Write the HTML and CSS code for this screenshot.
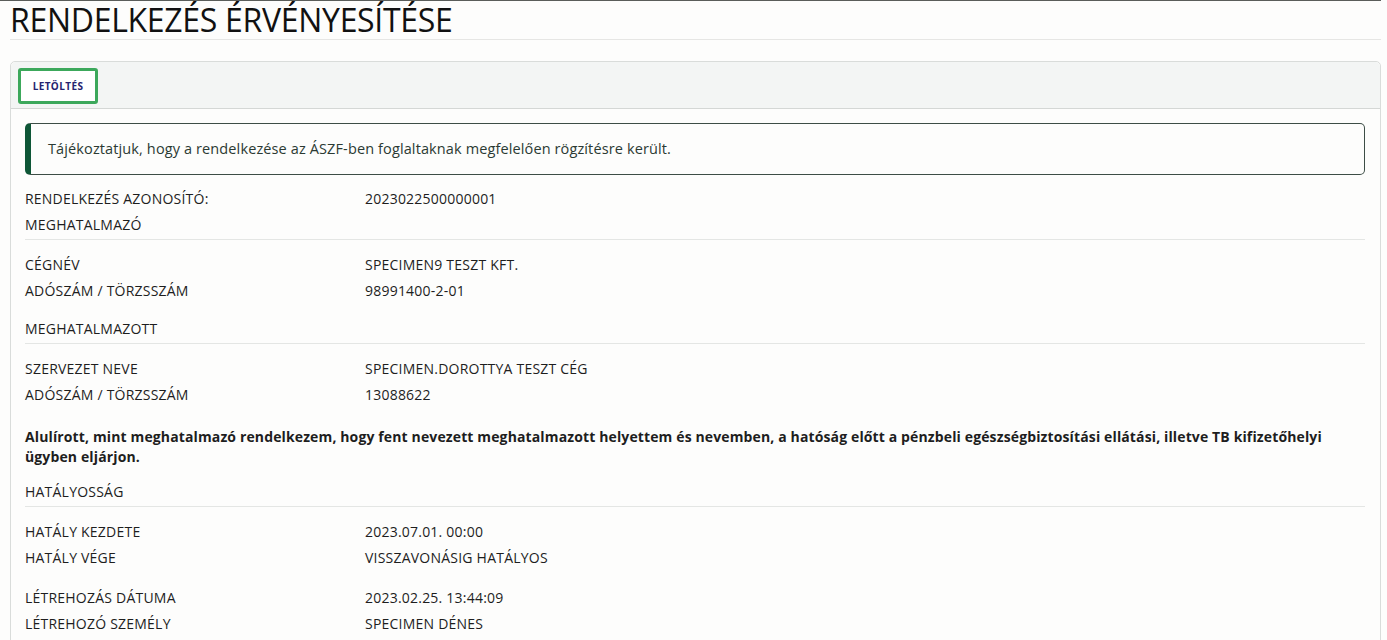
FILE: index.html
```html
<!DOCTYPE html>
<html lang="hu">
<head>
    <meta charset="UTF-8">
    <meta name="viewport" content="width=device-width, initial-scale=1.0">
    <title>Rendelkezés érvényesítése</title>
    <link rel="stylesheet" href="styles.css">
</head>
<body>
    <div class="page">
        <h1 class="page-title">RENDELKEZÉS ÉRVÉNYESÍTÉSE</h1>

        <div class="card">
            <div class="card-header">
                <button class="btn-download">LETÖLTÉS</button>
            </div>
            <div class="card-body">
                <div class="alert">Tájékoztatjuk, hogy a rendelkezése az ÁSZF-ben foglaltaknak megfelelően rögzítésre került.</div>

                <div class="row">
                    <div class="label">RENDELKEZÉS AZONOSÍTÓ:</div>
                    <div class="value">2023022500000001</div>
                </div>
                <div class="section-title">MEGHATALMAZÓ</div>

                <div class="group">
                    <div class="row">
                        <div class="label">CÉGNÉV</div>
                        <div class="value">SPECIMEN9 TESZT KFT.</div>
                    </div>
                    <div class="row">
                        <div class="label">ADÓSZÁM / TÖRZSSZÁM</div>
                        <div class="value">98991400-2-01</div>
                    </div>
                </div>

                <div class="section-title">MEGHATALMAZOTT</div>

                <div class="group">
                    <div class="row">
                        <div class="label">SZERVEZET NEVE</div>
                        <div class="value">SPECIMEN.DOROTTYA TESZT CÉG</div>
                    </div>
                    <div class="row">
                        <div class="label">ADÓSZÁM / TÖRZSSZÁM</div>
                        <div class="value">13088622</div>
                    </div>
                </div>

                <p class="statement">Alulírott, mint meghatalmazó rendelkezem, hogy fent nevezett meghatalmazott helyettem és nevemben, a hatóság előtt a pénzbeli egészségbiztosítási ellátási, illetve TB kifizetőhelyi ügyben eljárjon.</p>

                <div class="section-title">HATÁLYOSSÁG</div>

                <div class="group">
                    <div class="row">
                        <div class="label">HATÁLY KEZDETE</div>
                        <div class="value">2023.07.01. 00:00</div>
                    </div>
                    <div class="row">
                        <div class="label">HATÁLY VÉGE</div>
                        <div class="value">VISSZAVONÁSIG HATÁLYOS</div>
                    </div>
                </div>

                <div class="group group-last">
                    <div class="row">
                        <div class="label">LÉTREHOZÁS DÁTUMA</div>
                        <div class="value">2023.02.25. 13:44:09</div>
                    </div>
                    <div class="row">
                        <div class="label">LÉTREHOZÓ SZEMÉLY</div>
                        <div class="value">SPECIMEN DÉNES</div>
                    </div>
                </div>
            </div>
        </div>
    </div>
</body>
</html>
```

FILE: styles.css
```css
body {
    margin: 0;
    background: #fdfdfc;
    font-family: "Open Sans", "Liberation Sans", sans-serif;
    color: #1e1e1e;
}
.page {
    border-top: 1px solid #5a5d5a;
    margin-right: 6px;
    padding: 0 0 0 10px;
}
.page-title {
    margin: 0 0 21px;
    padding-bottom: 0;
    font-size: 32px;
    font-weight: 400;
    letter-spacing: -0.3px;
    line-height: 38px;
    color: #111;
    border-bottom: 1px solid #e6e6e4;
}
.card {
    border: 1px solid #d9dcda;
    border-radius: 5px;
    background: #fdfdfc;
}
.card-header {
    background: #f3f5f4;
    border-bottom: 1px solid #d4d7d5;
    padding: 6px 7px 4px;
    border-radius: 5px 5px 0 0;
}
.btn-download {
    width: 80px;
    height: 36px;
    background: #fff;
    border: 3px solid #3ca85b;
    border-radius: 3px;
    font-family: inherit;
    font-size: 10px;
    font-weight: 700;
    letter-spacing: 0.4px;
    color: #25236f;
    padding: 0;
}
.card-body {
    padding: 14px 15px 0 14px;
    font-size: 14px;
    line-height: 26px;
    letter-spacing: 0.22px;
}
.alert {
    border: 1px solid #3d4d46;
    border-left: 6px solid #0e5636;
    border-radius: 5px;
    padding: 12px 17px;
    color: #2b3a33;
    font-size: 14.5px;
    letter-spacing: 0.12px;
    margin-bottom: 11px;
}
.row {
    display: grid;
    grid-template-columns: 340px 1fr;
}
.section-title {
    border-bottom: 1px solid #e4e6e4;
    padding-bottom: 1px;
    margin-bottom: 12px;
}
.group {
    margin-bottom: 12px;
}
.group-last {
    margin-top: 14px;
}
.statement {
    margin: 19px 0 12px;
    font-weight: 700;
    line-height: 20px;
    letter-spacing: 0.13px;
}
```
